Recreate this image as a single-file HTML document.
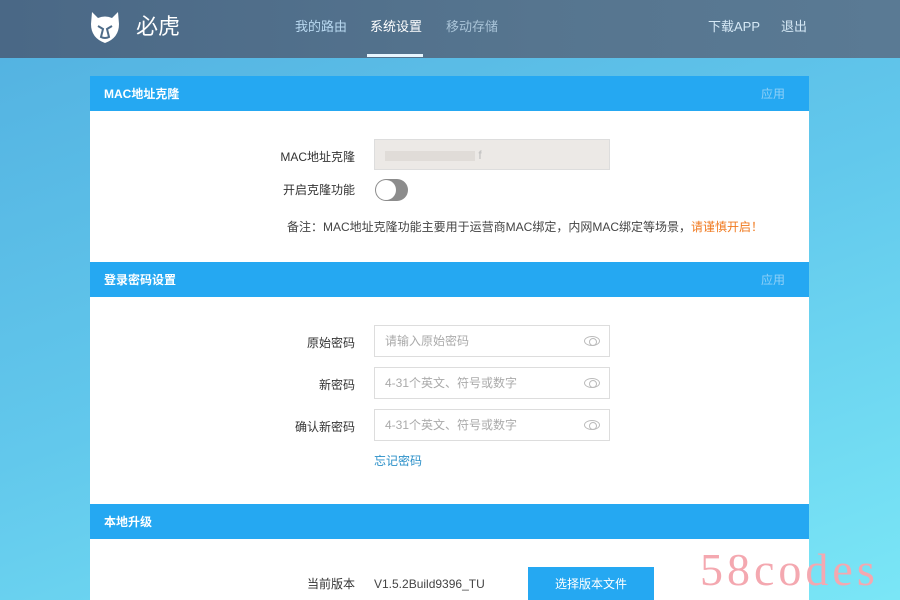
<!DOCTYPE html>
<html><head><meta charset="utf-8"><style>
*{margin:0;padding:0;box-sizing:border-box}
body{width:900px;height:600px;overflow:hidden;position:relative;font-family:"Liberation Sans","Noto Sans CJK SC",sans-serif;background:linear-gradient(160deg,#52b0e0 0%,#62c8ec 50%,#7ae6f6 100%);line-height:1.2}
.hdr{position:absolute;left:0;top:0;width:900px;height:58px;background:linear-gradient(90deg,#4a6886,#56758f 60%,#5a7a94);}
.hdr .t{position:absolute;color:#fff;}
.nav{position:absolute;top:19px;font-size:13px;color:#b8d8f0}
.panel{position:absolute;left:90px;width:719px;background:#fff}
.sh{position:absolute;left:90px;width:719px;height:35px;background:#25a8f2;color:#fff;font-size:12px;font-weight:bold;padding:11px 0 0 14px}
.sh span{position:absolute;right:24px;top:11px;font-weight:normal;color:#8fd0f7;font-size:12px}
.lab{position:absolute;font-size:12px;color:#333;text-align:right;width:120px}
.inp{position:absolute;left:374px;width:236px;height:32px;border:1px solid #ddd;font-size:12px;color:#aaa;padding:8px 10px}
.eye{position:absolute;right:9px;top:10px;width:16px;height:10px;border:1px solid #bbb;border-radius:50%}
.eye:after{content:"";position:absolute;left:4px;top:1px;width:6px;height:6px;border:1px solid #bbb;border-radius:50%}
</style></head><body>
<div class="hdr">
<svg style="position:absolute;left:88px;top:10px" width="34" height="34" viewBox="0 0 34 34"><path d="M4 2 L10 8 Q17 5 24 8 L30 2 L31 14 Q31 28 17 33 Q3 28 3 14 Z" fill="#fff"/><path d="M10 16 L15 19 L13 27 Q17 29 21 27 L19 19 L24 16" stroke="#4e6c89" stroke-width="2" fill="none"/></svg>
<div class="t" style="left:136px;top:14px;font-size:22px">必虎</div>
<div class="nav" style="left:295px">我的路由</div>
<div class="nav" style="left:370px;color:#fff">系统设置</div>
<div style="position:absolute;left:367px;top:54px;width:56px;height:3px;background:#e8f6ff"></div>
<div class="nav" style="left:446px;color:#a9c4d8">移动存储</div>
<div class="nav" style="left:708px;color:#d5e8f5">下载APP</div>
<div class="nav" style="left:781px;color:#d5e8f5">退出</div>
</div>
<div class="panel" style="top:76px;height:524px"></div>
<div class="sh" style="top:76px">MAC地址克隆<span>应用</span></div>
<div class="lab" style="left:235px;top:150px">MAC地址克隆</div>
<div class="inp" style="top:139px;height:31px;background:#ece9e6;color:#bbb"><span style="display:inline-block;width:90px;height:10px;background:#e0dcd8;vertical-align:middle"></span> f</div>
<div class="lab" style="left:235px;top:183px">开启克隆功能</div>
<div style="position:absolute;left:375px;top:179px;width:33px;height:22px;border-radius:11px;background:#8c8c8c"><div style="position:absolute;left:1px;top:1px;width:20px;height:20px;border-radius:50%;background:#fff"></div></div>
<div style="position:absolute;left:287px;top:220px;font-size:12px;color:#444">备注：MAC地址克隆功能主要用于运营商MAC绑定，内网MAC绑定等场景，<span style="color:#f07a20">请谨慎开启！</span></div>
<div class="sh" style="top:262px">登录密码设置<span>应用</span></div>
<div class="lab" style="left:235px;top:336px">原始密码</div>
<div class="inp" style="top:325px">请输入原始密码<div class="eye"></div></div>
<div class="lab" style="left:235px;top:378px">新密码</div>
<div class="inp" style="top:367px">4-31个英文、符号或数字<div class="eye"></div></div>
<div class="lab" style="left:235px;top:420px">确认新密码</div>
<div class="inp" style="top:409px">4-31个英文、符号或数字<div class="eye"></div></div>
<div style="position:absolute;left:374px;top:454px;font-size:12px;color:#2a8fc8">忘记密码</div>
<div class="sh" style="top:504px">本地升级</div>
<div class="lab" style="left:235px;top:577px">当前版本</div>
<div style="position:absolute;left:374px;top:577px;font-size:12px;color:#444">V1.5.2Build9396_TU</div>
<div style="position:absolute;left:528px;top:567px;width:126px;height:33px;background:#25a8f2;color:#fff;font-size:12px;text-align:center;padding-top:10px">选择版本文件</div>
<div style="position:absolute;left:700px;top:547px;font-family:'Liberation Serif',serif;font-size:46px;color:#f4a8b0;letter-spacing:4px;line-height:1">58codes</div>
</body></html>
